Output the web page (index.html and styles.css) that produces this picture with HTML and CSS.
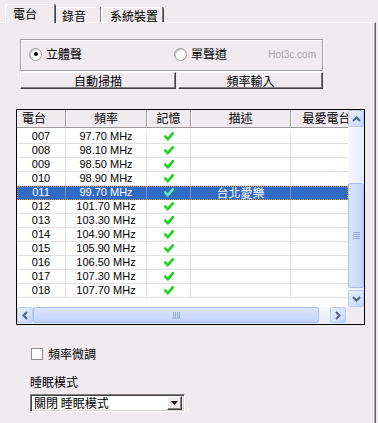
FILE: index.html
```html
<!DOCTYPE html>
<html lang="zh-Hant">
<head>
<meta charset="utf-8">
<link rel="stylesheet" href="styles.css">
</head>
<body>
<div class="win">
  <div class="tabs">
    <div class="tab active">電台</div>
    <div class="tab t2">錄音</div>
    <div class="tab t3">系統裝置</div>
  </div>
  <div class="panel">
    <div class="group">
      <div class="radio r1"><span class="rb on"></span><span>立體聲</span></div>
      <div class="radio"><span class="rb"></span><span>單聲道</span></div>
      <span class="wm">Hot3c.com</span>
    </div>
    <div class="btns">
      <div class="btn b1">自動掃描</div>
      <div class="btn b2">頻率輸入</div>
    </div>
    <div class="list">
      <div class="view">
        <div class="hdr">
          <div class="hc c1 left">電台</div>
          <div class="hc c2">頻率</div>
          <div class="hc c3">記憶</div>
          <div class="hc c4">描述</div>
          <div class="hc c5">最愛電台</div>
        </div>
        <div class="rows">
          <div class="row"><div class="c c1">007</div><div class="c c2">97.70 MHz</div><div class="c c3"><svg class="ck" width="10" height="9" viewBox="0 0 10 9"><path d="M1.3 4.6 L3.8 7.2 L8.8 1.3"/></svg></div><div class="c c4"></div><div class="c c5"></div></div>
          <div class="row"><div class="c c1">008</div><div class="c c2">98.10 MHz</div><div class="c c3"><svg class="ck" width="10" height="9" viewBox="0 0 10 9"><path d="M1.3 4.6 L3.8 7.2 L8.8 1.3"/></svg></div><div class="c c4"></div><div class="c c5"></div></div>
          <div class="row"><div class="c c1">009</div><div class="c c2">98.50 MHz</div><div class="c c3"><svg class="ck" width="10" height="9" viewBox="0 0 10 9"><path d="M1.3 4.6 L3.8 7.2 L8.8 1.3"/></svg></div><div class="c c4"></div><div class="c c5"></div></div>
          <div class="row"><div class="c c1">010</div><div class="c c2">98.90 MHz</div><div class="c c3"><svg class="ck" width="10" height="9" viewBox="0 0 10 9"><path d="M1.3 4.6 L3.8 7.2 L8.8 1.3"/></svg></div><div class="c c4"></div><div class="c c5"></div></div>
          <div class="row sel"><div class="c c1">011</div><div class="c c2">99.70 MHz</div><div class="c c3"><svg class="ck" width="10" height="9" viewBox="0 0 10 9"><path d="M1.3 4.6 L3.8 7.2 L8.8 1.3"/></svg></div><div class="c c4 cjk">台北愛樂</div><div class="c c5"></div></div>
          <div class="row"><div class="c c1">012</div><div class="c c2">101.70 MHz</div><div class="c c3"><svg class="ck" width="10" height="9" viewBox="0 0 10 9"><path d="M1.3 4.6 L3.8 7.2 L8.8 1.3"/></svg></div><div class="c c4"></div><div class="c c5"></div></div>
          <div class="row"><div class="c c1">013</div><div class="c c2">103.30 MHz</div><div class="c c3"><svg class="ck" width="10" height="9" viewBox="0 0 10 9"><path d="M1.3 4.6 L3.8 7.2 L8.8 1.3"/></svg></div><div class="c c4"></div><div class="c c5"></div></div>
          <div class="row"><div class="c c1">014</div><div class="c c2">104.90 MHz</div><div class="c c3"><svg class="ck" width="10" height="9" viewBox="0 0 10 9"><path d="M1.3 4.6 L3.8 7.2 L8.8 1.3"/></svg></div><div class="c c4"></div><div class="c c5"></div></div>
          <div class="row"><div class="c c1">015</div><div class="c c2">105.90 MHz</div><div class="c c3"><svg class="ck" width="10" height="9" viewBox="0 0 10 9"><path d="M1.3 4.6 L3.8 7.2 L8.8 1.3"/></svg></div><div class="c c4"></div><div class="c c5"></div></div>
          <div class="row"><div class="c c1">016</div><div class="c c2">106.50 MHz</div><div class="c c3"><svg class="ck" width="10" height="9" viewBox="0 0 10 9"><path d="M1.3 4.6 L3.8 7.2 L8.8 1.3"/></svg></div><div class="c c4"></div><div class="c c5"></div></div>
          <div class="row"><div class="c c1">017</div><div class="c c2">107.30 MHz</div><div class="c c3"><svg class="ck" width="10" height="9" viewBox="0 0 10 9"><path d="M1.3 4.6 L3.8 7.2 L8.8 1.3"/></svg></div><div class="c c4"></div><div class="c c5"></div></div>
          <div class="row"><div class="c c1">018</div><div class="c c2">107.70 MHz</div><div class="c c3"><svg class="ck" width="10" height="9" viewBox="0 0 10 9"><path d="M1.3 4.6 L3.8 7.2 L8.8 1.3"/></svg></div><div class="c c4"></div><div class="c c5"></div></div>
        </div>
      </div>
      <div class="vs">
        <div class="sbtn"><svg width="9" height="6" viewBox="0 0 9 6"><path class="ar" d="M1 5 L4.5 1.5 L8 5"/></svg></div>
        <div class="vthumb"><svg width="7" height="7" viewBox="0 0 7 7"><path class="grip" d="M0 0.5 H7 M0 2.5 H7 M0 4.5 H7 M0 6.5 H7"/></svg></div>
        <div class="vspace"></div>
        <div class="sbtn"><svg width="9" height="6" viewBox="0 0 9 6"><path class="ar" d="M1 1 L4.5 4.5 L8 1"/></svg></div>
      </div>
      <div class="hs">
        <div class="hbtn"><svg width="6" height="9" viewBox="0 0 6 9"><path class="ar" d="M5 1 L1.5 4.5 L5 8"/></svg></div>
        <div class="hthumb"><svg width="7" height="7" viewBox="0 0 7 7"><path class="grip" d="M0.5 0 V7 M2.5 0 V7 M4.5 0 V7 M6.5 0 V7"/></svg></div>
        <div class="hspace"></div>
        <div class="hbtn"><svg width="6" height="9" viewBox="0 0 6 9"><path class="ar" d="M1 1 L4.5 4.5 L1 8"/></svg></div>
      </div>
      <div class="corner"></div>
    </div>
    <div class="chk"><span class="cbox"></span><span>頻率微調</span></div>
    <div class="lbl">睡眠模式</div>
    <div class="select">
      <span class="stext">關閉 睡眠模式</span>
      <span class="dd"><svg width="7" height="4" viewBox="0 0 7 4"><path d="M0 0 H7 L3.5 4 Z" fill="#000"/></svg></span>
    </div>
  </div>
</div>
</body>
</html>
```

FILE: styles.css
```css
* { box-sizing: border-box; }
html, body { margin: 0; padding: 0; }
body {
  background: #efebef;
  font-family: "Noto Sans CJK TC", "Noto Sans CJK SC", sans-serif;
  font-size: 12px;
  color: #000;
}
.win { width: 378px; height: 423px; overflow: hidden; }

.tabs {
  display: flex;
  align-items: flex-end;
  height: 22px;
  padding-left: 5px;
}
.tab {
  height: 15px;
  line-height: 15px;
  padding-left: 6px;
  border-top: 1px solid #fff;
  border-left: 1px solid #fff;
  border-right: 1px solid #808080;
  box-shadow: 1px 0 0 #404040;
  border-radius: 2px 2px 0 0;
  white-space: nowrap;
  background: #efebef;
}
.tab.t2 { width: 46px; }
.tab.t3 { width: 62px; padding-left: 8px; }
.tab.active {
  width: 50px;
  height: 19px;
  line-height: 17px;
  padding-left: 7px;
  margin-bottom: -1px;
  position: relative;
  z-index: 1;
}

.panel {
  width: 376px;
  height: 401px;
  border-top: 1px solid #fff;
  border-right: 1px solid #606060;
  box-shadow: inset -1px 0 0 #a8a8a8;
}

.group {
  margin: 16px 0 0 20px;
  width: 303px;
  height: 32px;
  border: 1px solid #a0a0a0;
  box-shadow: inset 1px 1px 0 #fff, 1px 1px 0 #fff;
  display: flex;
  align-items: center;
  padding: 0 6px 2px 8px;
}
.radio { display: flex; align-items: center; gap: 4px; line-height: 14px; }
.r1 { width: 145px; }
.rb {
  width: 13px;
  height: 13px;
  border-radius: 50%;
  background: #fff;
  border: 1px solid #9a9a9a;
  box-shadow: inset 1px 1px 0 #c8c8c8;
  display: flex;
  align-items: center;
  justify-content: center;
}
.rb.on::after {
  content: "";
  width: 4px;
  height: 4px;
  border-radius: 50%;
  background: #000;
}
.wm {
  margin-left: auto;
  font-family: "Liberation Sans", sans-serif;
  font-size: 10px;
  color: #a8a8a8;
}

.btns { display: flex; gap: 2px; margin: 1px 0 0 20px; }
.btn {
  height: 17px;
  line-height: 15px;
  text-align: center;
  border: 1px solid;
  border-color: #fff #404040 #404040 #fff;
  box-shadow: inset -1px -1px 0 #808080;
}
.b1 { width: 156px; }
.b2 { width: 145px; }

.list {
  margin: 20px 0 0 16px;
  width: 349px;
  height: 216px;
  border: 1px solid #000;
  background: #fff;
  display: grid;
  grid-template-columns: 331px 16px;
  grid-template-rows: 197px 17px;
}
.view { overflow: hidden; }
.hdr {
  display: flex;
  height: 18px;
  background: #efebef;
  border-bottom: 1px solid #9c9c9c;
}
.hc {
  flex: none;
  height: 17px;
  line-height: 16px;
  text-align: center;
  white-space: nowrap;
  overflow: hidden;
  border-right: 1px solid #a0a0a0;
  box-shadow: inset 1px 0 0 #fff;
}
.hc.left { text-align: left; padding-left: 5px; }
.c1 { width: 49px; }
.c2 { width: 81px; }
.c3 { width: 44px; }
.c4 { width: 100px; }
.c5 { width: 72px; }

.rows { padding-top: 2px; }
.row { display: flex; height: 14px; }
.c {
  flex: none;
  height: 14px;
  line-height: 13px;
  text-align: center;
  white-space: nowrap;
  font-family: "Liberation Sans", sans-serif;
  font-size: 11px;
  border-right: 1px solid #e2e0e5;
  border-bottom: 1px solid #e2e0e5;
}
.c.cjk { font-family: "Noto Sans CJK TC", sans-serif; font-size: 12px; line-height: 13px; }
.c3 { display: flex; align-items: center; justify-content: center; padding-bottom: 1px; }
.ck { display: block; }
.ck path { fill: none; stroke: #1ed41e; stroke-width: 2.6; stroke-linecap: square; }
.row.sel { outline: 1px dotted #c89a3c; outline-offset: -1px; }
.row.sel .c { background: #316ac5; color: #fff; border-right-color: #6c93d6; border-bottom-color: #316ac5; }
.row.sel .ck path { stroke: #5ee8b0; }

.vs {
  display: flex;
  flex-direction: column;
  background: linear-gradient(to right, #f7f9fe, #e3ebfb);
}
.sbtn, .hbtn {
  flex: none;
  border: 1px solid #bccdf2;
  border-radius: 2px;
  background: linear-gradient(135deg, #eaf1fe, #c6d6fb);
  display: flex;
  align-items: center;
  justify-content: center;
}
.sbtn { width: 16px; height: 17px; }
.hbtn { width: 16px; height: 16px; }
.ar { fill: none; stroke: #4d6185; stroke-width: 2; }
.vthumb {
  flex: none;
  margin-top: 56px;
  height: 105px;
  border: 1px solid #aac0ec;
  border-radius: 2px;
  background: linear-gradient(to right, #dbe6fd, #c3d4fb);
  display: flex;
  align-items: center;
  justify-content: center;
}
.vspace { flex: 1; }
.grip { stroke: #8eaaec; stroke-width: 1; }

.hs {
  display: flex;
  align-items: flex-start;
  background: linear-gradient(to bottom, #f7f9fe, #e3ebfb);
}
.hthumb {
  flex: none;
  width: 286px;
  height: 16px;
  border: 1px solid #aac0ec;
  border-radius: 2px;
  background: linear-gradient(to bottom, #dbe6fd, #c3d4fb);
  display: flex;
  align-items: center;
  justify-content: center;
}
.hspace { flex: none; width: 11px; }
.corner { background: #efebef; }

.chk {
  display: flex;
  align-items: center;
  gap: 5px;
  margin: 23px 0 0 31px;
  height: 12px;
  line-height: 12px;
}
.cbox {
  width: 12px;
  height: 12px;
  background: #fff;
  border: 1px solid #8c8c8c;
}
.lbl { margin: 15px 0 0 30px; line-height: 14px; }
.select {
  margin: 5px 0 0 30px;
  width: 155px;
  height: 18px;
  background: #fff;
  border: 1px solid;
  border-color: #808080 #fff #fff #808080;
  box-shadow: inset 1px 1px 0 #404040, inset -1px -1px 0 #d4d0c8;
  display: flex;
  align-items: center;
  padding: 0 2px 0 3px;
}
.stext { flex: 1; line-height: 14px; }
.dd {
  width: 15px;
  height: 14px;
  background: #efebef;
  border: 1px solid;
  border-color: #fff #404040 #404040 #fff;
  box-shadow: inset -1px -1px 0 #808080;
  display: flex;
  align-items: center;
  justify-content: center;
}
```
